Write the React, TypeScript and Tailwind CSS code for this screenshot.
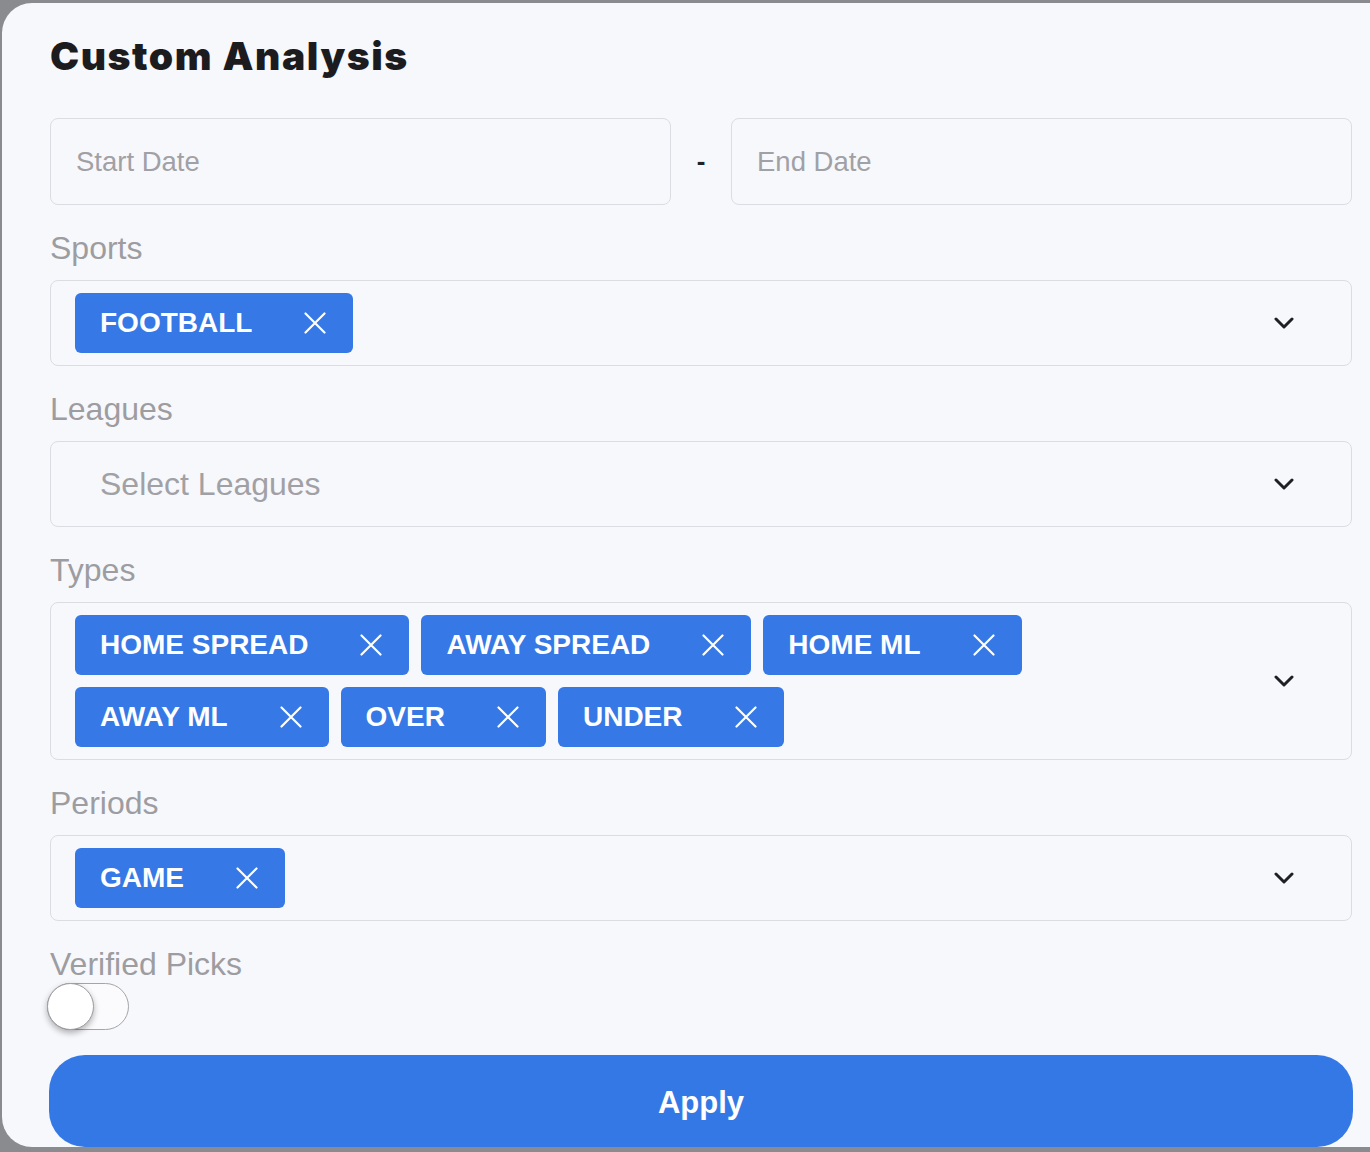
import React from "react";

const labelCls = "text-[32px] leading-[36px] text-[#9d9da1] mt-[25px] mb-[14px]";

const XIcon = () => (
    <svg width="22" height="22" viewBox="0 0 22 22" fill="none" stroke="white" strokeWidth="2.2" strokeLinecap="round">
        <path d="M1.5 1.5 20.5 20.5 M20.5 1.5 1.5 20.5" />
    </svg>
);

const Chevron = () => (
    <svg width="20" height="12" viewBox="0 0 20 12" fill="none" stroke="#1f2024" strokeWidth="3" strokeLinecap="round" strokeLinejoin="round">
        <path d="M2 2 10 10 18 2" />
    </svg>
);

const Chip = ({ text }: { text: string }) => (
    <div className="h-[60px] bg-[#3578e6] rounded-[6px] pl-[25px] pr-[27px] flex items-center gap-[52px]">
        <span className="text-white font-bold text-[28px] leading-none">{text}</span>
        <XIcon />
    </div>
);

const SelectBox = ({ chips, placeholder }: { chips?: string[]; placeholder?: string }) => (
    <div className="w-[1302px] min-h-[86px] border border-[#dcdde2] rounded-[8px] flex items-center">
        <div className="flex-1 flex flex-wrap gap-[12px] py-[12px] pl-[24px] pr-[200px]">
            {chips && chips.map((c) => <Chip key={c} text={c} />)}
            {placeholder && (
                <span className="pl-[25px] h-[60px] flex items-center text-[32px] text-[#a1a1a5]">{placeholder}</span>
            )}
        </div>
        <div className="pr-[57px] flex items-center">
            <Chevron />
        </div>
    </div>
);

export default function App() {
    return (
        <div className="w-[1370px] h-[1152px] bg-[#8a8b8f] overflow-hidden pt-[3px] pl-[2px]" style={{ fontFamily: "'Liberation Sans', Arial, sans-serif" }}>
            <div className="w-[1420px] h-[1144px] bg-[#f7f8fc] rounded-[30px] pl-[48px] pt-[31px]">
                <h1
                    className="text-[39px] leading-[44px] font-black text-[#1c1c1f] tracking-[0.04em]"
                    style={{ fontFamily: "Inter, 'Noto Sans', sans-serif" }}
                >
                    Custom Analysis
                </h1>

                <div className="mt-[40px] w-[1302px] flex items-center">
                    <div className="w-[621px] h-[87px] border border-[#dcdde2] rounded-[8px] flex items-center pl-[25px] text-[27.5px] text-[#a1a1a5]">
                        Start Date
                    </div>
                    <div className="w-[60px] text-center text-[26px] font-bold text-[#222]">-</div>
                    <div className="w-[621px] h-[87px] border border-[#dcdde2] rounded-[8px] flex items-center pl-[25px] text-[27.5px] text-[#a1a1a5]">
                        End Date
                    </div>
                </div>

                <p className={labelCls}>Sports</p>
                <SelectBox chips={["FOOTBALL"]} />

                <p className={labelCls}>Leagues</p>
                <SelectBox placeholder="Select Leagues" />

                <p className={labelCls}>Types</p>
                <SelectBox chips={["HOME SPREAD", "AWAY SPREAD", "HOME ML", "AWAY ML", "OVER", "UNDER"]} />

                <p className={labelCls}>Periods</p>
                <SelectBox chips={["GAME"]} />

                <p className="text-[32px] leading-[36px] text-[#9d9da1] mt-[25px] mb-px">Verified Picks</p>
                <div className="relative -ml-[3px] w-[82px] h-[47px] rounded-full border border-[#a5a5a8] bg-[#fbfbfd]">
                    <div className="absolute -left-px -top-px w-[47px] h-[47px] rounded-full bg-white border border-[#9c9ca0] shadow-[0_3px_6px_rgba(0,0,0,0.3)]" />
                </div>

                <button className="mt-[25px] -ml-px w-[1304px] h-[92px] pt-[4px] rounded-[36px] bg-[#3478e5] text-white font-bold text-[31px]">
                    Apply
                </button>
            </div>
        </div>
    );
}
